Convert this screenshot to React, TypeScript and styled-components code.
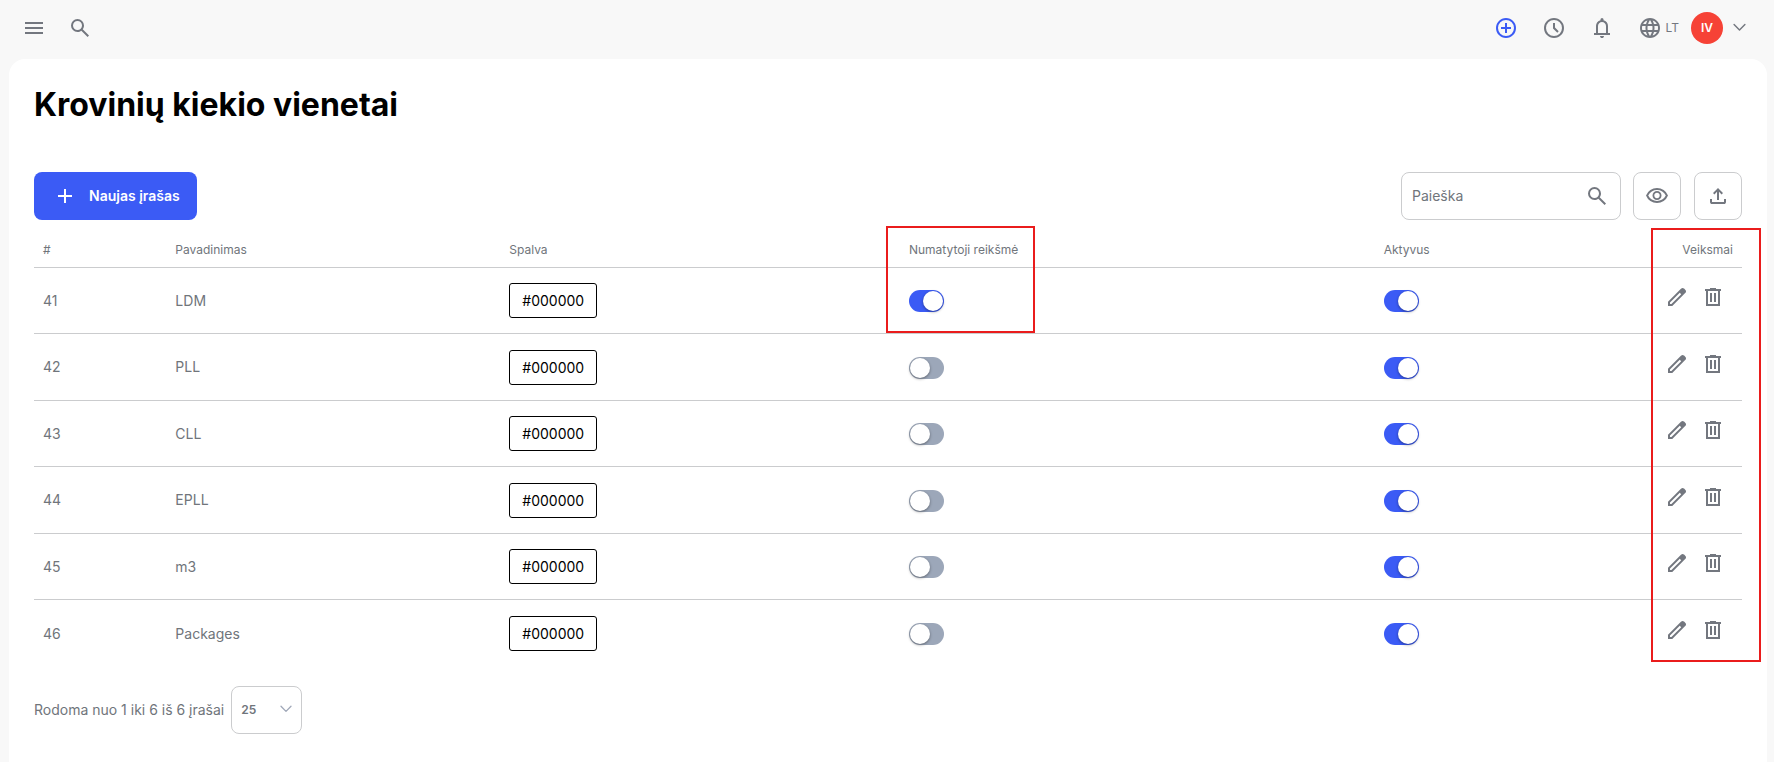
import React, { useState } from "react";
import styled, { createGlobalStyle, css } from "styled-components";

const colors = {
  page: "#f8f8f8",
  card: "#ffffff",
  primary: "#3b5bf5",
  text: "#70757b",
  icon: "#73777f",
  line: "#cbccce",
  off: "#9ca7b9",
  avatar: "#f64236",
  mark: "#ea1c1c",
};

const GlobalStyle = createGlobalStyle`
  *, *::before, *::after { box-sizing: border-box; }
  body {
    margin: 0;
    background: ${colors.page};
    color: ${colors.text};
    font-family: Inter, "Liberation Sans", sans-serif;
    font-size: 14px;
    line-height: 20px;
  }
  button, input, select { font: inherit; color: inherit; }
`;

const iconPaths = {
  menu: "M120-240v-80h720v80H120Zm0-200v-80h720v80H120Zm0-200v-80h720v80H120Z",
  search:
    "M784-120 532-372q-30 24-69 38t-83 14q-109 0-184.5-75.5T120-580q0-109 75.5-184.5T380-840q109 0 184.5 75.5T640-580q0 44-14 83t-38 69l252 252-56 56ZM380-400q75 0 127.5-52.5T560-580q0-75-52.5-127.5T380-760q-75 0-127.5 52.5T200-580q0 75 52.5 127.5T380-400Z",
  addCircle:
    "M440-280h80v-160h160v-80H520v-160h-80v160H280v80h160v160Zm40 200q-83 0-156-31.5T197-197q-54-54-85.5-127T80-480q0-83 31.5-156T197-763q54-54 127-85.5T480-880q83 0 156 31.5T763-763q54 54 85.5 127T880-480q0 83-31.5 156T763-197q-54 54-127 85.5T480-80Zm0-80q134 0 227-93t93-227q0-134-93-227t-227-93q-134 0-227 93t-93 227q0 134 93 227t227 93Z",
  clock:
    "m612-292 56-56-148-148v-184h-80v216l172 172ZM480-80q-83 0-156-31.5T197-197q-54-54-85.5-127T80-480q0-83 31.5-156T197-763q54-54 127-85.5T480-880q83 0 156 31.5T763-763q54 54 85.5 127T880-480q0 83-31.5 156T763-197q-54 54-127 85.5T480-80Zm0-80q134 0 227-93t93-227q0-134-93-227t-227-93q-134 0-227 93t-93 227q0 134 93 227t227 93Z",
  bell: "M160-200v-80h80v-280q0-83 50-147.5T420-792v-28q0-25 17.5-42.5T480-880q25 0 42.5 17.5T540-820v28q80 20 130 84.5T720-560v280h80v80H160Zm320 120q-33 0-56.5-23.5T400-160h160q0 33-23.5 56.5T480-80ZM320-280h320v-280q0-66-47-113t-113-47q-66 0-113 47t-47 113v280Z",
  globe:
    "M480-80q-82 0-155-31.5t-127.5-86Q143-252 111.5-325T80-480q0-83 31.5-155.5t86-127Q252-817 325-848.5T480-880q83 0 155.5 31.5t127 86q54.5 54.5 86 127T880-480q0 82-31.5 155t-86 127.5q-54.5 54.5-127 86T480-80Zm0-82q26-36 45-75t31-83H404q12 44 31 83t45 75Zm-104-16q-18-33-31.5-68.5T322-320H204q29 50 72.5 87t99.5 55Zm208 0q56-18 99.5-55t72.5-87H638q-9 38-22.5 73.5T584-178ZM170-400h136q-3-20-4.5-39.5T300-480q0-21 1.5-40.5T306-560H170q-5 20-7.5 39.5T160-480q0 21 2.5 40.5T170-400Zm216 0h188q3-20 4.5-39.5T580-480q0-21-1.5-40.5T574-560H386q-3 20-4.5 39.5T380-480q0 21 1.5 40.5T386-400Zm268 0h136q5-20 7.5-39.5T800-480q0-21-2.5-40.5T790-560H654q3 20 4.5 39.5T660-480q0 21-1.5 40.5T654-400Zm-16-240h118q-29-50-72.5-87T584-782q18 33 31.5 68.5T638-640Zm-234 0h152q-12-44-31-83t-45-75q-26 36-45 75t-31 83Zm-200 0h118q9-38 22.5-73.5T376-782q-56 18-99.5 55T204-640Z",
  add: "M440-440H200v-80h240v-240h80v240h240v80H520v240h-80v-240Z",
  eye: "M480-320q75 0 127.5-52.5T660-500q0-75-52.5-127.5T480-680q-75 0-127.5 52.5T300-500q0 75 52.5 127.5T480-320Zm0-72q-45 0-76.5-31.5T372-500q0-45 31.5-76.5T480-608q45 0 76.5 31.5T588-500q0 45-31.5 76.5T480-392Zm0 192q-146 0-266-81.5T40-500q54-137 174-218.5T480-800q146 0 266 81.5T920-500q-54 137-174 218.5T480-200Zm0-80q113 0 207.5-59.5T832-500q-50-101-144.5-160.5T480-720q-113 0-207.5 59.5T128-500q50 101 144.5 160.5T480-280Z",
  upload:
    "M440-320v-326L336-542l-56-58 200-200 200 200-56 58-104-104v326h-80ZM240-160q-33 0-56.5-23.5T160-240v-120h80v120h480v-120h80v120q0 33-23.5 56.5T720-160H240Z",
  edit: "M200-200h57l391-391-57-57-391 391v57Zm-80 80v-170l528-527q12-11 26.5-17t30.5-6q16 0 31 6t26 18l55 56q12 11 17.5 26t5.5 30q0 16-5.5 30.5T817-647L290-120H120Z",
  trash:
    "M200-120v-600h-40v-80h200v-40h240v40h200v80h-40v600H200Zm80-80h400v-520H280v520Zm80-80h80v-360h-80v360Zm160 0h80v-360h-80v360Z",
};

function Icon({ name }: { name: keyof typeof iconPaths }) {
  return (
    <svg width="24" height="24" viewBox="0 -960 960 960" fill="currentColor" aria-hidden="true">
      <path d={iconPaths[name]} />
    </svg>
  );
}

function Chevron({ size }: { size: number }) {
  return (
    <svg width={size} height={size} viewBox="0 0 12 12" fill="none" stroke="currentColor" aria-hidden="true">
      <path d="M1 3.2 6 8.4 11 3.2" strokeWidth="1.3" strokeLinecap="round" strokeLinejoin="round" />
    </svg>
  );
}

const TopBar = styled.header`
  display: flex;
  align-items: center;
  justify-content: space-between;
  height: 59px;
  padding: 0 28px 4px 22px;
`;

const BarGroup = styled.div<{ $gap: number }>`
  display: flex;
  align-items: center;
  gap: ${(p) => p.$gap}px;
`;

const IconButton = styled.button<{ $accent?: boolean }>`
  display: flex;
  align-items: center;
  padding: 0;
  border: 0;
  background: none;
  color: ${(p) => (p.$accent ? colors.primary : colors.icon)};
  cursor: pointer;
`;

const LanguageButton = styled(IconButton)`
  gap: 4px;
  font-size: 12px;
`;

const AccountButton = styled(IconButton)`
  gap: 10px;
`;

const Avatar = styled.span`
  display: flex;
  align-items: center;
  justify-content: center;
  width: 32px;
  height: 32px;
  border-radius: 50%;
  background: ${colors.avatar};
  color: #fff;
  font-size: 12px;
  font-weight: 600;
`;

const Card = styled.main`
  min-height: calc(100vh - 59px);
  margin: 0 7px 0 9px;
  padding: 24px 25px;
  border-radius: 16px 16px 0 0;
  background: ${colors.card};
`;

const Title = styled.h1`
  margin: 0 0 45px;
  color: #000;
  font-size: 32px;
  font-weight: 700;
  line-height: 44px;
`;

const Toolbar = styled.div`
  display: flex;
  align-items: center;
  justify-content: space-between;
`;

const PrimaryButton = styled.button`
  display: flex;
  align-items: center;
  gap: 12px;
  height: 48px;
  padding: 0 17px 0 19px;
  border: 0;
  border-radius: 8px;
  background: ${colors.primary};
  color: #fff;
  font-weight: 600;
  cursor: pointer;
`;

const outlined = css`
  height: 48px;
  border: 1px solid ${colors.line};
  border-radius: 8px;
  background: #fff;
`;

const SearchField = styled.label`
  ${outlined}
  display: flex;
  align-items: center;
  width: 220px;
  padding: 0 11px 0 10px;
  color: ${colors.icon};
`;

const SearchInput = styled.input`
  flex: 1;
  min-width: 0;
  padding: 0;
  border: 0;
  outline: 0;
  background: none;
  &::placeholder { color: ${colors.text}; opacity: 1; }
`;

const SquareButton = styled.button`
  ${outlined}
  display: flex;
  align-items: center;
  justify-content: center;
  width: 48px;
  padding: 0;
  color: ${colors.icon};
  cursor: pointer;
`;

const Table = styled.table`
  width: 100%;
  margin-top: 12px;
  border-spacing: 0;
  table-layout: fixed;
`;

const Col = styled.col<{ $share: string }>`
  width: ${(p) => p.$share};
`;

const HeadCell = styled.th<{ $end?: boolean }>`
  position: relative;
  height: 36px;
  padding: 0 9px;
  border-bottom: 1px solid ${colors.line};
  font-size: 12px;
  font-weight: 400;
  text-align: ${(p) => (p.$end ? "right" : "left")};
`;

const Row = styled.tr`
  height: 66px;
  &:nth-child(even) { height: 67px; }
  &:not(:last-child) > td { border-bottom: 1px solid ${colors.line}; }
`;

const Cell = styled.td`
  padding: 0 9px;
  vertical-align: middle;
`;

/* Red annotation frame laid over a table column */
const Frame = styled.span<{ $side: "left" | "right" }>`
  position: absolute;
  border: 2px solid ${colors.mark};
  pointer-events: none;
  ${(p) =>
    p.$side === "left"
      ? "left: -14px; top: -6px; width: 149px; height: 107px;"
      : "right: -19px; top: -4px; width: 110px; height: 434px;"}
`;

const ColorTag = styled.span`
  display: inline-block;
  padding: 7px 12px;
  border: 1px solid #000;
  border-radius: 3px;
  color: #000;
  line-height: 19px;
  vertical-align: middle;
`;

const Toggle = styled.input`
  appearance: none;
  display: block;
  width: 35px;
  height: 22px;
  margin: 1px 0 0;
  padding: 1px;
  border-radius: 11px;
  background: ${colors.off};
  cursor: pointer;
  &::before {
    content: "";
    display: block;
    width: 20px;
    height: 20px;
    border-radius: 50%;
    background: #fff;
    box-shadow: 0 1px 3px rgba(0, 0, 0, 0.4);
  }
  &:checked { background: ${colors.primary}; }
  &:checked::before { margin-left: 13px; }
`;

const Actions = styled.div`
  display: flex;
  justify-content: flex-end;
  gap: 12px;
  padding: 0 8px 7px 0;
`;

const Footer = styled.div`
  display: flex;
  align-items: center;
  gap: 7px;
  margin-top: 19px;
`;

const SelectBox = styled.div`
  display: grid;
  align-items: center;
  color: #a0a8b8;
  > * { grid-area: 1 / 1; }
  > svg { justify-self: end; margin: 0 10px 3px 0; pointer-events: none; }
`;

const PageSize = styled.select`
  ${outlined}
  appearance: none;
  width: 71px;
  padding: 0 9px;
  color: ${colors.text};
  font-size: 12px;
  font-weight: 600;
`;

const initialRows = [
  { id: 41, name: "LDM", isDefault: true, active: true },
  { id: 42, name: "PLL", isDefault: false, active: true },
  { id: 43, name: "CLL", isDefault: false, active: true },
  { id: 44, name: "EPLL", isDefault: false, active: true },
  { id: 45, name: "m3", isDefault: false, active: true },
  { id: 46, name: "Packages", isDefault: false, active: true },
];

export default function App() {
  const [rows, setRows] = useState(initialRows);
  const flip = (id: number, key: "isDefault" | "active") =>
    setRows((all) => all.map((r) => (r.id === id ? { ...r, [key]: !r[key] } : r)));

  return (
    <>
      <GlobalStyle />
      <TopBar>
        <BarGroup $gap={22}>
          <IconButton aria-label="Meniu"><Icon name="menu" /></IconButton>
          <IconButton aria-label="Paieška"><Icon name="search" /></IconButton>
        </BarGroup>
        <BarGroup $gap={12}>
          <BarGroup $gap={24}>
            <IconButton $accent aria-label="Pridėti"><Icon name="addCircle" /></IconButton>
            <IconButton aria-label="Istorija"><Icon name="clock" /></IconButton>
            <IconButton aria-label="Pranešimai"><Icon name="bell" /></IconButton>
            <LanguageButton><Icon name="globe" />LT</LanguageButton>
          </BarGroup>
          <AccountButton><Avatar>IV</Avatar><Chevron size={13} /></AccountButton>
        </BarGroup>
      </TopBar>
      <Card>
        <Title>Krovinių kiekio vienetai</Title>
        <Toolbar>
          <PrimaryButton><Icon name="add" />Naujas įrašas</PrimaryButton>
          <BarGroup $gap={12}>
            <SearchField>
              <SearchInput type="text" placeholder="Paieška" aria-label="Paieška" />
              <Icon name="search" />
            </SearchField>
            <BarGroup $gap={13}>
              <SquareButton aria-label="Stulpeliai"><Icon name="eye" /></SquareButton>
              <SquareButton aria-label="Eksportuoti"><Icon name="upload" /></SquareButton>
            </BarGroup>
          </BarGroup>
        </Toolbar>
        <Table>
          <colgroup>
            <Col $share="7.75%" />
            <Col $share="19.55%" />
            <Col $share="23.4%" />
            <Col $share="27.8%" />
            <Col $share="15.5%" />
            <Col $share="6%" />
          </colgroup>
          <thead>
            <tr>
              <HeadCell>#</HeadCell>
              <HeadCell>Pavadinimas</HeadCell>
              <HeadCell>Spalva</HeadCell>
              <HeadCell>Numatytoji reikšmė<Frame $side="left" /></HeadCell>
              <HeadCell>Aktyvus</HeadCell>
              <HeadCell $end>Veiksmai<Frame $side="right" /></HeadCell>
            </tr>
          </thead>
          <tbody>
            {rows.map((r) => (
              <Row key={r.id}>
                <Cell>{r.id}</Cell>
                <Cell>{r.name}</Cell>
                <Cell><ColorTag>#000000</ColorTag></Cell>
                <Cell>
                  <Toggle
                    type="checkbox"
                    aria-label={`Numatytoji reikšmė ${r.name}`}
                    checked={r.isDefault}
                    onChange={() => flip(r.id, "isDefault")}
                  />
                </Cell>
                <Cell>
                  <Toggle
                    type="checkbox"
                    aria-label={`Aktyvus ${r.name}`}
                    checked={r.active}
                    onChange={() => flip(r.id, "active")}
                  />
                </Cell>
                <Cell>
                  <Actions>
                    <IconButton aria-label={`Redaguoti ${r.name}`}><Icon name="edit" /></IconButton>
                    <IconButton aria-label={`Ištrinti ${r.name}`}><Icon name="trash" /></IconButton>
                  </Actions>
                </Cell>
              </Row>
            ))}
          </tbody>
        </Table>
        <Footer>
          <label htmlFor="page-size">Rodoma nuo 1 iki 6 iš 6 įrašai</label>
          <SelectBox>
            <PageSize id="page-size" defaultValue="25">
              <option>10</option>
              <option>25</option>
              <option>50</option>
            </PageSize>
            <Chevron size={12} />
          </SelectBox>
        </Footer>
      </Card>
    </>
  );
}
